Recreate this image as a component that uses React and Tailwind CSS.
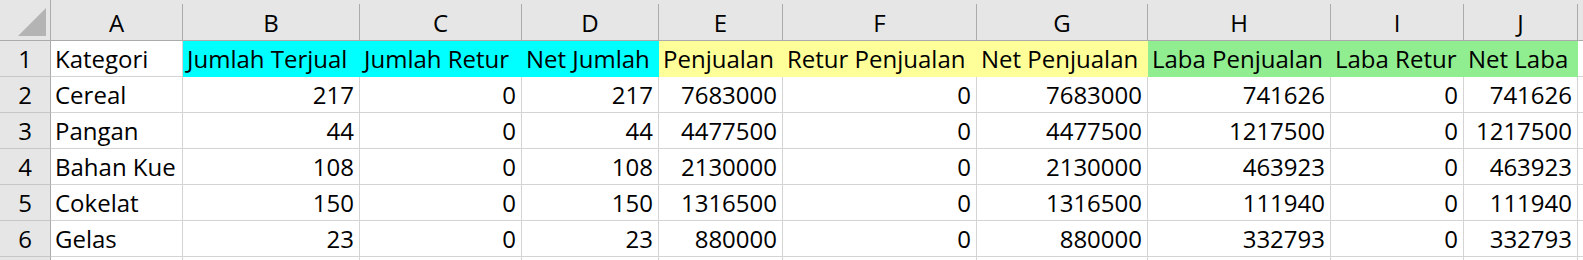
import React from 'react';

const cols = ['A', 'B', 'C', 'D', 'E', 'F', 'G', 'H', 'I', 'J'];

const headers = [
  { text: 'Kategori', bg: '' },
  { text: 'Jumlah Terjual', bg: 'bg-[#00ffff] border-[#00ffff]' },
  { text: 'Jumlah Retur', bg: 'bg-[#00ffff] border-[#00ffff]' },
  { text: 'Net Jumlah', bg: 'bg-[#00ffff] border-[#00ffff]' },
  { text: 'Penjualan', bg: 'bg-[#ffff99] border-[#ffff99]' },
  { text: 'Retur Penjualan', bg: 'bg-[#ffff99] border-[#ffff99]' },
  { text: 'Net Penjualan', bg: 'bg-[#ffff99] border-[#ffff99]' },
  { text: 'Laba Penjualan', bg: 'bg-[#90ee90] border-[#90ee90]' },
  { text: 'Laba Retur', bg: 'bg-[#90ee90] border-[#90ee90]' },
  { text: 'Net Laba', bg: 'bg-[#90ee90] border-[#90ee90]' },
];

const rows = [
  ['Cereal', 217, 0, 217, 7683000, 0, 7683000, 741626, 0, 741626],
  ['Pangan', 44, 0, 44, 4477500, 0, 4477500, 1217500, 0, 1217500],
  ['Bahan Kue', 108, 0, 108, 2130000, 0, 2130000, 463923, 0, 463923],
  ['Cokelat', 150, 0, 150, 1316500, 0, 1316500, 111940, 0, 111940],
  ['Gelas', 23, 0, 23, 880000, 0, 880000, 332793, 0, 332793],
];

const grid =
  'grid grid-cols-[51px_132px_177px_162px_137px_124px_194px_171px_183px_133px_114px_1fr]';

const RowHead = ({ n }) => (
  <div className="h-[36px] bg-[#e6e6e6] border-r border-r-[#ababab] border-b border-b-[#c6c6c6] flex items-end justify-center pb-[5px]">
    {n}
  </div>
);

const Cell = ({ children, right, cls = 'border-[#d4d4d4]' }) => (
  <div
    className={`h-[36px] border-r border-b ${cls} flex items-end pb-[5px] pl-[4px] pr-[5px] whitespace-nowrap overflow-hidden ${
      right ? 'justify-end' : 'justify-start'
    }`}
  >
    {children}
  </div>
);

export default function App() {
  return (
    <div className="w-[1583px] h-[260px] overflow-hidden bg-white text-black text-[24px] leading-none font-['Open_Sans',sans-serif]">
      {/* column headers */}
      <div className={`${grid} h-[41px] bg-[#e6e6e6] border-b border-b-[#ababab]`}>
        <div className="h-[40px] border-r border-r-[#ababab] relative">
          <svg className="absolute left-[18px] top-[8px]" width="28" height="28" viewBox="0 0 28 28">
            <polygon points="28,0 28,28 0,28" fill="#b4b4b4" />
          </svg>
        </div>
        {cols.map((c) => (
          <div key={c} className="mt-[4px] h-[36px] border-r border-r-[#ababab] flex items-end justify-center pb-[5px]">
            {c}
          </div>
        ))}
        <div className="mt-[4px] h-[36px]" />
      </div>

      {/* row 1 */}
      <div className={grid}>
        <RowHead n={1} />
        {headers.map((h, i) => (
          <Cell key={i} cls={h.bg || 'border-[#d4d4d4]'}>
            {h.text}
          </Cell>
        ))}
        <Cell />
      </div>

      {rows.map((r, ri) => (
        <div key={ri} className={grid}>
          <RowHead n={ri + 2} />
          {r.map((v, i) => (
            <Cell key={i} right={i > 0}>
              {v}
            </Cell>
          ))}
          <Cell />
        </div>
      ))}

      {/* row 7, only its top edge shows */}
      <div className={grid}>
        <RowHead />
        {cols.map((c) => (
          <Cell key={c} />
        ))}
        <Cell />
      </div>
    </div>
  );
}
